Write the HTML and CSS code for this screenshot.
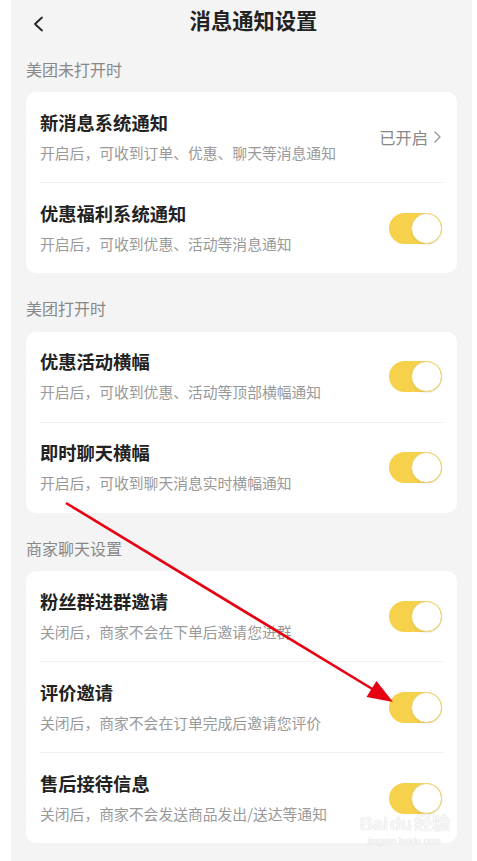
FILE: index.html
```html
<!DOCTYPE html>
<html lang="zh-CN">
<head>
    <meta charset="UTF-8">
    <meta name="viewport" content="width=device-width, initial-scale=1.0">
    <title>消息通知设置</title>
    <link rel="stylesheet" href="styles.css">
</head>
<body>

    <div class="screen">
        <header class="topbar">
            <span class="back">
                <svg width="12" height="16" viewBox="0 0 12 16"><path d="M10 1.5 L3 8 L10 14.5" fill="none" stroke="#222" stroke-width="1.8" stroke-linecap="round" stroke-linejoin="round"/></svg>
            </span>
            <h1>消息通知设置</h1>
        </header>

        <div class="section-label first">美团未打开时</div>
        <div class="card">
            <div class="row">
                <div class="text">
                    <div class="title">新消息系统通知</div>
                    <div class="desc">开启后，可收到订单、优惠、聊天等消息通知</div>
                </div>
                <div class="status">已开启
                    <svg width="9" height="14" viewBox="0 0 9 14"><path d="M2 2 L7 7 L2 12" fill="none" stroke="#999" stroke-width="1.4" stroke-linecap="round" stroke-linejoin="round"/></svg>
                </div>
            </div>
            <div class="row">
                <div class="text">
                    <div class="title">优惠福利系统通知</div>
                    <div class="desc">开启后，可收到优惠、活动等消息通知</div>
                </div>
                <div class="switch"><span class="knob"></span></div>
            </div>
        </div>

        <div class="section-label">美团打开时</div>
        <div class="card">
            <div class="row">
                <div class="text">
                    <div class="title">优惠活动横幅</div>
                    <div class="desc">开启后，可收到优惠、活动等顶部横幅通知</div>
                </div>
                <div class="switch"><span class="knob"></span></div>
            </div>
            <div class="row">
                <div class="text">
                    <div class="title">即时聊天横幅</div>
                    <div class="desc">开启后，可收到聊天消息实时横幅通知</div>
                </div>
                <div class="switch"><span class="knob"></span></div>
            </div>
        </div>

        <div class="section-label">商家聊天设置</div>
        <div class="card">
            <div class="row">
                <div class="text">
                    <div class="title">粉丝群进群邀请</div>
                    <div class="desc">关闭后，商家不会在下单后邀请您进群</div>
                </div>
                <div class="switch"><span class="knob"></span></div>
            </div>
            <div class="row">
                <div class="text">
                    <div class="title">评价邀请</div>
                    <div class="desc">关闭后，商家不会在订单完成后邀请您评价</div>
                </div>
                <div class="switch"><span class="knob"></span></div>
            </div>
            <div class="row">
                <div class="text">
                    <div class="title">售后接待信息</div>
                    <div class="desc">关闭后，商家不会发送商品发出/送达等通知</div>
                </div>
                <div class="switch"><span class="knob"></span></div>
            </div>
        </div>

        <!-- 标注箭头 -->
        <svg class="arrow" width="477" height="861" viewBox="0 0 477 861">
            <line x1="66" y1="503" x2="374" y2="690" stroke="#e60012" stroke-width="2.6"/>
            <polygon points="393,702 366.5,697 376.5,681" fill="#e60012"/>
        </svg>

        <div class="watermark">
            <div class="wm-logo">Bai<span class="paw">du</span>经验</div>
            <div class="wm-url">jingyan.baidu.com</div>
        </div>
    </div>

</body>
</html>
```

FILE: styles.css
```css
body {
    margin: 0;
    padding: 0;
    background-color: white;
    font-family: "Noto Sans CJK SC", "Noto Sans", sans-serif;
    color: #222;
}

.screen {
    position: relative;
    margin-left: 11px;
    width: 431px;
    min-height: 861px;
    padding: 0 15px;
    background-color: #f4f4f4;
}

.topbar {
    height: 40px;
    display: flex;
    align-items: center;
    justify-content: center;
    position: relative;
}

.topbar h1 {
    margin: 0;
    font-size: 21.3px;
    font-weight: bold;
    color: #222;
    line-height: 40px;
    padding-left: 24px;
}

.back {
    position: absolute;
    left: 6px;
    top: 13px;
}

.section-label {
    padding: 24px 0 12.5px 0;
    font-size: 16px;
    line-height: 22px;
    color: #888;
}

.section-label.first {
    padding: 18px 0 12px 0;
}

.card {
    background-color: white;
    border-radius: 10px;
    padding: 0 14px;
}

.row {
    display: flex;
    align-items: center;
    justify-content: space-between;
    height: 90px;
    border-bottom: 1px solid #f0f0f0;
}

.row:last-child {
    border-bottom: none;
}

.text {
    display: flex;
    flex-direction: column;
    gap: 10px;
    padding-bottom: 1px;
}

.title {
    font-size: 18.3px;
    font-weight: bold;
    line-height: 22px;
    color: #222;
}

.desc {
    font-size: 14.8px;
    line-height: 20px;
    color: #999;
}

.status {
    display: flex;
    align-items: center;
    gap: 5px;
    font-size: 16.3px;
    color: #888;
    margin-right: 1px;
}

.switch {
    width: 53px;
    height: 31px;
    border-radius: 16px;
    background-color: #f6d24c;
    display: flex;
    align-items: center;
    justify-content: flex-end;
    margin-right: 1px;
}

.knob {
    width: 29px;
    height: 29px;
    border-radius: 50%;
    background-color: white;
    border: 1px solid #ecd37a;
    box-shadow: 0 1px 2px rgba(0, 0, 0, 0.08);
}

.arrow {
    position: absolute;
    left: -11px;
    top: 0;
    pointer-events: none;
}

.watermark {
    position: absolute;
    left: 349px;
    top: 814px;
    color: #f7f7f7;
    text-shadow: 0 0 1px #ccc;
    font-family: "Liberation Sans", "Noto Sans CJK SC", sans-serif;
    pointer-events: none;
}

.wm-logo {
    font-size: 18px;
    font-weight: bold;
    line-height: 20px;
}

.paw {
    margin: 0 2px;
}

.wm-url {
    font-size: 9px;
    line-height: 14px;
    padding-left: 8px;
}
```
